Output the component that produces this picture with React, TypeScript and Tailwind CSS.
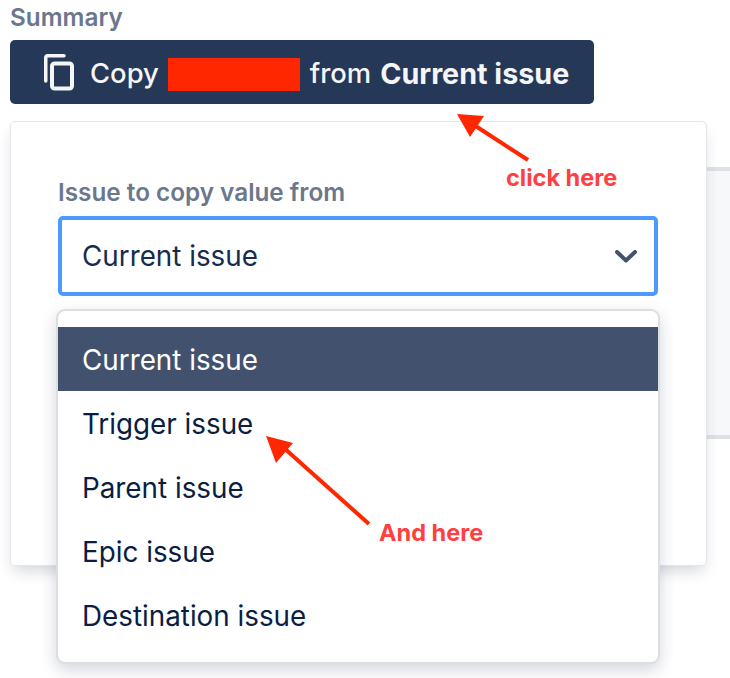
const options = ['Current issue', 'Trigger issue', 'Parent issue', 'Epic issue', 'Destination issue']

function CopyIcon() {
  return (
    <svg width="30" height="37" viewBox="0 0 30 37" fill="none" stroke="#f4f5f7" className="shrink-0">
      <path d="M1.75 27V3.5a1.75 1.75 0 0 1 1.75-1.75H20" strokeWidth="3.5" strokeLinecap="round" />
      <rect x="8" y="9.5" width="20" height="25" rx="2.5" strokeWidth="4" />
    </svg>
  )
}

function Arrow({ x1, y1, x2, y2, tip }: { x1: number; y1: number; x2: number; y2: number; tip: string }) {
  return (
    <svg width="730" height="678" className="absolute left-0 top-0 pointer-events-none">
      <line x1={x1} y1={y1} x2={x2} y2={y2} stroke="#ff2600" strokeWidth="4" />
      <polygon points={tip} fill="#ff2600" />
    </svg>
  )
}

export default function App() {
  return (
    <div className="relative w-[730px] h-[678px] overflow-hidden bg-white font-['Inter',sans-serif]">
      {/* panel peeking out behind the card */}
      <div className="absolute left-[600px] top-[167px] w-[130px] h-[272px] bg-[#f7f8fa] border-y-4 border-[#dfe1e6]" />

      <div className="relative pl-[10px] pt-[4px]">
        <div className="h-[26px] text-[24.3px] leading-[26px] font-semibold text-[#6b778c]">Summary</div>
        <button className="mt-[10px] flex items-center w-[584px] h-[64px] pl-[34px] rounded-[5px] bg-[#253858] text-[#f4f5f7] text-[27.4px] font-medium">
          <CopyIcon />
          <div className="flex items-center pt-[3px]">
            <span className="ml-[16px]">Copy</span>
            <span className="ml-[9px] mt-[2px] w-[132px] h-[33px] bg-[#ff2600]" />
            <span className="ml-[10px]">from</span>
            <span className="ml-[9px] text-[28.7px] font-bold">Current issue</span>
          </div>
        </button>

        <div className="mt-[17px] w-[697px] h-[445px] pl-[47px] pt-[56px] bg-white rounded-[5px] border border-[#e4e6ea] shadow-[0_8px_16px_-4px_rgba(9,30,66,0.2)]">
          <div className="h-[28px] text-[24.3px] leading-[28px] font-semibold text-[#6b778c]">Issue to copy value from</div>
          <div className="mt-[10px] flex items-center justify-between w-[600px] h-[80px] pl-[20px] pr-[17px] rounded-[5px] border-4 border-[#4c9aff] text-[27.8px] text-[#172b4d]">
            <span className="pt-[2px]">Current issue</span>
            <svg width="22" height="13" viewBox="0 0 22 13" fill="none" stroke="#42526e" strokeWidth="4" strokeLinecap="round" strokeLinejoin="round">
              <path d="M2 2l9 8.5L20 2" />
            </svg>
          </div>
        </div>
      </div>

      {/* open select menu */}
      <div className="absolute left-[56px] top-[309px] w-[604px] h-[355px] py-[16px] bg-white rounded-[9px] border-2 border-[#dedede] shadow-[0_6px_16px_rgba(9,30,66,0.18)] text-[27.8px] text-[#091e42]">
        {options.map((option, i) => (
          <div key={option} className={`flex items-center h-[64px] pl-[24px] pt-[4px] ${i === 0 ? 'bg-[#42526e] text-white' : ''}`}>
            {option}
          </div>
        ))}
      </div>

      {/* annotations */}
      <Arrow x1={528} y1={160} x2={474} y2={125} tip="457,114 484,116 470,137" />
      <Arrow x1={369} y1={524} x2={284} y2={448} tip="266,436 293,443 276,463" />
      <div className="absolute left-[506px] top-[164px] text-[23.5px] leading-[28px] font-bold text-[#ff4040]">click here</div>
      <div className="absolute left-[379px] top-[519px] text-[23.5px] leading-[28px] font-bold text-[#ff4040]">And here</div>
    </div>
  )
}
